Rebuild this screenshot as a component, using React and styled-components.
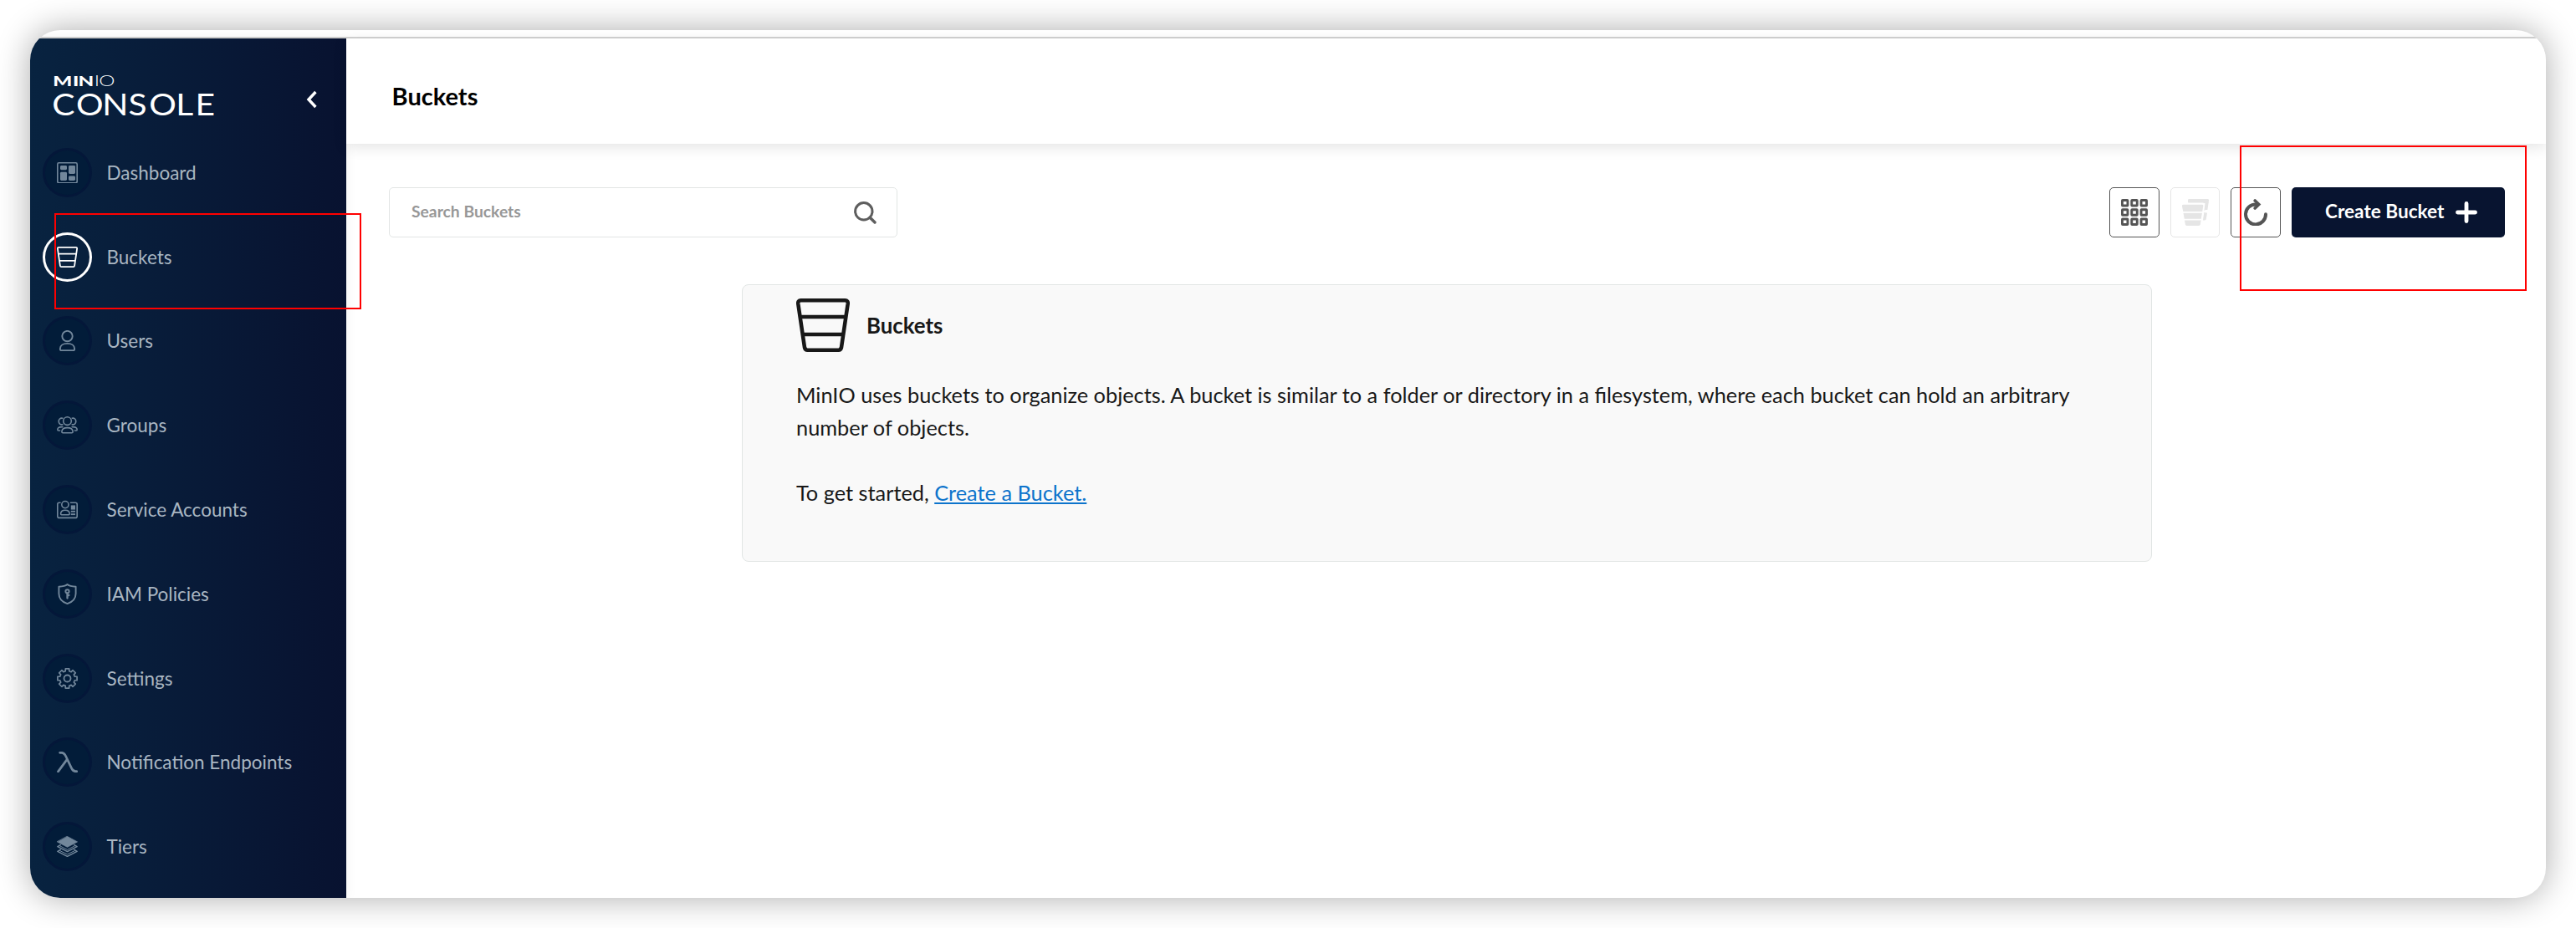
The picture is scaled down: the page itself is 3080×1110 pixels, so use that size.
import React from "react";
import styled, { createGlobalStyle } from "styled-components";

const GlobalStyle = createGlobalStyle`
  *, *::before, *::after { box-sizing: border-box; }
  body {
    margin: 0;
    background: #fff;
    font-family: Lato, "Open Sans", sans-serif;
  }
`;

const Stage = styled.div`
  position: relative;
  width: 3080px;
  height: 1110px;
  padding: 36px;
  overflow: hidden;
  background: #fff;
`;

const Window = styled.div`
  display: flex;
  flex-direction: column;
  width: 3008px;
  height: 1038px;
  border-radius: 36px;
  overflow: hidden;
  background: #fff;
  box-shadow: 0 0 40px rgba(0, 0, 0, 0.33);
`;

const WindowEdge = styled.div`
  flex: none;
  height: 10px;
  border-bottom: 2px solid #d2d2d2;
`;

const Body = styled.div`
  display: flex;
  flex: 1;
  min-height: 0;
`;

const Sidebar = styled.aside`
  flex: none;
  width: 378px;
  background: linear-gradient(90deg, #082340 0%, #081230 100%);
  box-shadow: 0 0 14px rgba(0, 0, 0, 0.06);
`;

const Brand = styled.div`
  display: flex;
  align-items: flex-start;
  justify-content: space-between;
  height: 110px;
  padding: 41px 35px 0 26px;
`;

const LogoSvg = styled.svg`
  display: block;
  overflow: visible;
  fill: #fff;
`;

const CollapseButton = styled.button`
  margin: 21px 0 0;
  padding: 0;
  border: 0;
  background: none;
  line-height: 0;
`;

const Nav = styled.nav`
  display: flex;
  flex-direction: column;
`;

const NavItem = styled.a`
  display: flex;
  align-items: center;
  gap: 17.5px;
  height: 100.8px;
  padding-left: 15px;
  color: #a9b6c2;
  font-size: 22.5px;
  text-decoration: none;
  white-space: nowrap;
`;

const NavIcon = styled.span`
  display: flex;
  align-items: center;
  justify-content: center;
  width: 59px;
  height: 59px;
  border-radius: 50%;
  border: 3px solid ${(p) => (p.$active ? "#fff" : "#041739")};
  background: ${(p) => (p.$active ? "transparent" : "#021c39")};
  color: ${(p) => (p.$active ? "#fff" : "#72879b")};
`;

const Main = styled.main`
  display: flex;
  flex-direction: column;
  flex: 1;
  min-width: 0;
`;

const Header = styled.header`
  display: flex;
  align-items: center;
  flex: none;
  height: 126px;
  padding: 12px 53px 0 54.6px;
  background: #fff;
  box-shadow: 0 4px 16px rgba(0, 0, 0, 0.11);
`;

const PageTitle = styled.h1`
  margin: 0;
  color: #000;
  font-size: 29px;
  font-weight: 700;
  line-height: 36px;
`;

const Toolbar = styled.div`
  display: flex;
  justify-content: space-between;
  padding: 52px 49px 0 51px;
`;

const SearchField = styled.div`
  display: flex;
  align-items: center;
  justify-content: space-between;
  width: 608px;
  height: 60px;
  padding: 0 24px 0 26px;
  border: 1px solid #e2e5e4;
  border-radius: 5px;
  color: #5e5e5e;
`;

const Placeholder = styled.span`
  padding-bottom: 2px;
  color: #979797;
  font-size: 19.3px;
  font-weight: 700;
  line-height: 24px;
`;

const Actions = styled.div`
  display: flex;
  gap: 13px;
`;

const IconButton = styled.button`
  display: flex;
  align-items: center;
  justify-content: center;
  width: 59.6px;
  height: 60px;
  padding: 0;
  border: 1px solid ${(p) => (p.$disabled ? "#e5e5e5" : "#555")};
  border-radius: 5px;
  background: #fff;
  color: ${(p) => (p.$disabled ? "#e5e5e5" : "#555")};
`;

const CreateButton = styled.button`
  display: flex;
  align-items: center;
  justify-content: space-between;
  width: 255px;
  height: 60px;
  padding: 0 33.5px 0 40px;
  border: 0;
  border-radius: 5px;
  background: #081430;
  color: #fff;
  font-family: inherit;
  font-size: 22.6px;
  font-weight: 700;
  white-space: nowrap;
`;

const CreateLabel = styled.span`
  padding-bottom: 3px;
`;

const HelpCard = styled.section`
  align-self: center;
  width: 1686px;
  height: 332px;
  margin: 56px 0 0 2px;
  padding: 16px 64px 0;
  border: 1px solid #e2e6e5;
  border-radius: 8px;
  background: #f9f9f9;
  color: #181818;
`;

const HelpHeading = styled.div`
  display: flex;
  align-items: center;
  gap: 20px;
  height: 64px;
`;

const HelpTitle = styled.h2`
  margin: 0;
  font-size: 25.8px;
  font-weight: 700;
  line-height: 32px;
`;

const HelpText = styled.p`
  margin: 32px 0 0;
  font-size: 25.34px;
  line-height: 39px;
`;

const HelpLink = styled.a`
  color: #0d74cc;
  text-decoration: underline;
`;

const Highlight = styled.div`
  position: absolute;
  left: ${(p) => p.$x}px;
  top: ${(p) => p.$y}px;
  width: ${(p) => p.$w}px;
  height: ${(p) => p.$h}px;
  border: 2px solid #f00;
`;

function Icon({ size = 25, box = 25, children }) {
  return (
    <svg width={size} height={size} viewBox={`0 0 ${box} ${box}`} fill="none" stroke="currentColor" strokeLinejoin="round" strokeLinecap="round">
      {children}
    </svg>
  );
}

const DashboardIcon = () => (
  <Icon>
    <rect x="0.8" y="0.8" width="23.4" height="23.9" rx="1.6" strokeWidth="1.6" />
    <g fill="currentColor" stroke="none">
      <rect x="4" y="4" width="8" height="5.2" rx="1.4" />
      <rect x="14" y="4" width="8" height="10" rx="1.4" />
      <rect x="4" y="11.8" width="8" height="10.2" rx="1.4" />
      <rect x="14" y="16.6" width="8" height="5.4" rx="1.4" />
    </g>
  </Icon>
);

const BucketIcon = ({ size = 25, weight = 4.6 }) => (
  <Icon size={size} box={64}>
    <path
      d="M5.5 2.3 H58.5 Q62.2 2.3 61.7 6.5 L54 58.5 Q53.4 61.7 50.5 61.7 H13.5 Q10.6 61.7 10 58.5 L2.3 6.5 Q1.8 2.3 5.5 2.3 Z M4.6 22 H59.4 M7.8 43 H56.2"
      strokeWidth={weight}
    />
  </Icon>
);

const UserIcon = () => (
  <Icon>
    <g strokeWidth="1.9">
      <circle cx="12.5" cy="7.1" r="6.2" />
      <path d="M3.9 22 C3.9 18 7.7 15.9 12.5 15.9 S21.1 18 21.1 22 V23 Q21.1 24.1 19.9 24.1 H5.1 Q3.9 24.1 3.9 23 Z" />
    </g>
  </Icon>
);

const GroupIcon = () => (
  <Icon>
    <g strokeWidth="1.6">
      <circle cx="12.5" cy="7.6" r="4.8" />
      <path d="M5.9 20.4 C5.9 17.3 8.8 15.6 12.5 15.6 S19.1 17.3 19.1 20.4 Q19.1 21.7 17.9 21.7 H7.1 Q5.9 21.7 5.9 20.4 Z" />
      <path d="M6.8 4.2 C4 3.6 2.2 5.6 2.2 8 C2.2 10.4 4.2 12.4 6.8 11.8 M18.2 4.2 C21 3.6 22.8 5.6 22.8 8 C22.8 10.4 20.8 12.4 18.2 11.8" />
      <path d="M6.8 14.6 C3.2 14.4 0.8 15.6 0.8 18 Q0.8 19 2 19 H3.6 M18.2 14.6 C21.8 14.4 24.2 15.6 24.2 18 Q24.2 19 23 19 H21.4" />
    </g>
  </Icon>
);

const ServiceAccountIcon = () => (
  <Icon>
    <g strokeWidth="1.6">
      <path d="M4 4.2 H2.8 Q0.8 4.2 0.8 6.2 V20.4 Q0.8 22.4 2.8 22.4 H22.2 Q24.2 22.4 24.2 20.4 V6.2 Q24.2 4.2 22.2 4.2 H16.4" />
      <circle cx="9.9" cy="6.6" r="4.1" />
      <path d="M4.6 17.6 C4.6 14.8 7 13.2 9.9 13.2 S15.2 14.8 15.2 17.6 Q15.2 18.8 14.2 18.8 H5.6 Q4.6 18.8 4.6 17.6 Z" />
    </g>
    <g fill="currentColor" stroke="none">
      <rect x="16.8" y="7.4" width="5.2" height="5.2" />
      <rect x="16.8" y="13.8" width="5.2" height="1.9" />
      <rect x="16.8" y="17.2" width="5.2" height="1.9" />
    </g>
  </Icon>
);

const PolicyIcon = () => (
  <Icon>
    <path d="M12.5 1 C14.5 2.7 18 3.5 22.6 3.7 V12 C22.6 18 18.6 22.1 12.5 24.1 C6.4 22.1 2.4 18 2.4 12 V3.7 C7 3.5 10.5 2.7 12.5 1 Z" strokeWidth="1.9" />
    <circle cx="12.5" cy="9.3" r="2.1" strokeWidth="2" />
    <path d="M12.5 11.6 V17.6 M12.5 14 H14.4" strokeWidth="2.3" />
  </Icon>
);

/* Eight-tooth cog outline around (12.5, 12.5). */
const gearPath = (() => {
  const pts = [];
  for (let i = 0; i < 8; i++) {
    const a = (i * Math.PI) / 4 - Math.PI / 2;
    [[-0.25, 9.1], [-0.19, 11.8], [0.19, 11.8], [0.25, 9.1]].forEach(([d, r]) => {
      pts.push(`${(12.5 + r * Math.cos(a + d)).toFixed(2)} ${(12.5 + r * Math.sin(a + d)).toFixed(2)}`);
    });
  }
  return `M${pts.join(" L")} Z`;
})();

const SettingsIcon = () => (
  <Icon>
    <path d={gearPath} strokeWidth="1.7" />
    <circle cx="12.5" cy="12.5" r="4" strokeWidth="1.8" />
  </Icon>
);

const LambdaIcon = () => (
  <Icon>
    <path d="M3.6 1.3 H5.6 C8.4 1.3 9.6 3.2 10.8 5.8 L17.4 19.6 C18.8 22.6 20.2 23.7 22.4 23.7 H23.7 M12.2 9.4 L1.5 23.9" strokeWidth="2.7" />
  </Icon>
);

const TiersIcon = () => (
  <Icon>
    <path d="M12.5 0.5 L24.5 6.9 L12.5 13.3 L0.5 6.9 Z" fill="currentColor" strokeWidth="0.8" />
    <path d="M4.2 10.6 L0.9 12.6 L12.5 18.6 L24.1 12.6 L20.8 10.6 M4.2 16.4 L0.9 18.4 L12.5 24.4 L24.1 18.4 L20.8 16.4" strokeWidth="1.5" />
    <path d="M3.6 11.8 L12.5 16.4 L21.4 11.8 M3.6 17.6 L12.5 21.8 L21.4 17.6" strokeWidth="1" />
  </Icon>
);

const SearchIcon = () => (
  <Icon size={27} box={27}>
    <circle cx="11.8" cy="11.8" r="10.2" strokeWidth="3" />
    <path d="M19.2 19.2 L25 25" strokeWidth="3.4" />
  </Icon>
);

const GridIcon = () => (
  <svg width="32" height="32" viewBox="0 0 32 32" fill="none" stroke="currentColor" strokeWidth="2.9" strokeLinejoin="round">
    {[1.45, 12.75, 24.05].map((y) =>
      [1.45, 12.75, 24.05].map((x) => <rect key={`${x}-${y}`} x={x} y={y} width="6.5" height="6.5" rx="0.5" />)
    )}
  </svg>
);

const MultiBucketIcon = () => (
  <svg width="32" height="32" viewBox="0 0 32 32" fill="currentColor">
    <path d="M8.4 0 H30.6 Q32.1 0 32 1.5 L31.6 5 H26.5 Q25.6 4.6 24.6 4.6 H8.2 Q7 4.6 7 3.4 V1.4 Q7 0 8.4 0 Z" />
    <path d="M27.6 4.6 H31.6 L30.4 13 H28.2 L26.4 14 Z M26.4 15.8 L28 16.4 H30 L28.8 24 Q28.5 25.4 27.2 25.4 H24.9 Z" />
    <path d="M1.6 6.8 H23.8 Q25.5 6.8 25.3 8.4 L24.2 14.9 H1.2 L0 8.4 Q-0.2 6.8 1.6 6.8 Z M1.5 16.8 H23.9 L22.8 23.8 H2.7 Z M3 25.5 H22.6 L21.8 30.6 Q21.5 32 20 32 H5.7 Q4.2 32 3.9 30.6 Z" />
  </svg>
);

const RefreshIcon = () => (
  <Icon size={32} box={32}>
    <path d="M28 18.2 A12 12 0 1 1 16 6.4 H18.5" strokeWidth="4" />
    <path d="M15.2 2 L19.8 6.5 L15.2 11" strokeWidth="3.6" strokeLinejoin="miter" />
  </Icon>
);

const PlusIcon = () => (
  <Icon size={26} box={26}>
    <path d="M13 2.5 V23.5 M2.5 13 H23.5" strokeWidth="4.8" />
  </Icon>
);

const Logo = () => (
  <LogoSvg width="194" height="52" viewBox="0 0 194 52">
    <g transform="scale(1.45 1)" fontSize="16.7">
      <text x="0.8 17.2 21.8" y="16.3" fontWeight="900">MIN</text>
      <text x="35 38.8" y="16.3" fontWeight="300">IO</text>
    </g>
    <text transform="scale(1.12 1)" x="0.2 25.9 53.9 81.6 103.8 132.4 153.2" y="50.6" fontSize="36.4" fontWeight="400">CONSOLE</text>
  </LogoSvg>
);

const navItems = [
  { label: "Dashboard", icon: DashboardIcon },
  { label: "Buckets", icon: BucketIcon, active: true },
  { label: "Users", icon: UserIcon },
  { label: "Groups", icon: GroupIcon },
  { label: "Service Accounts", icon: ServiceAccountIcon },
  { label: "IAM Policies", icon: PolicyIcon },
  { label: "Settings", icon: SettingsIcon },
  { label: "Notification Endpoints", icon: LambdaIcon },
  { label: "Tiers", icon: TiersIcon },
];

export default function App() {
  return (
    <>
      <GlobalStyle />
      <Stage>
        <Window>
          <WindowEdge />
          <Body>
            <Sidebar>
              <Brand>
                <Logo />
                <CollapseButton aria-label="Collapse menu">
                  <svg width="13" height="22" viewBox="0 0 13 22" fill="none" stroke="#fff" strokeWidth="3.4">
                    <path d="M11.4 2 L3 11 L11.4 20" />
                  </svg>
                </CollapseButton>
              </Brand>
              <Nav>
                {navItems.map(({ label, icon: Glyph, active }) => (
                  <NavItem key={label}>
                    <NavIcon $active={active}>
                      <Glyph />
                    </NavIcon>
                    {label}
                  </NavItem>
                ))}
              </Nav>
            </Sidebar>
            <Main>
              <Header>
                <PageTitle>Buckets</PageTitle>
              </Header>
              <Toolbar>
                <SearchField>
                  <Placeholder>Search Buckets</Placeholder>
                  <SearchIcon />
                </SearchField>
                <Actions>
                  <IconButton aria-label="Grid view">
                    <GridIcon />
                  </IconButton>
                  <IconButton $disabled aria-label="Select multiple">
                    <MultiBucketIcon />
                  </IconButton>
                  <IconButton aria-label="Refresh">
                    <RefreshIcon />
                  </IconButton>
                  <CreateButton>
                    <CreateLabel>Create Bucket</CreateLabel>
                    <PlusIcon />
                  </CreateButton>
                </Actions>
              </Toolbar>
              <HelpCard>
                <HelpHeading>
                  <BucketIcon size={64} />
                  <HelpTitle>Buckets</HelpTitle>
                </HelpHeading>
                <HelpText>
                  MinIO uses buckets to organize objects. A bucket is similar to a folder or directory in a filesystem,
                  where each bucket can hold an arbitrary number of objects.
                  <br />
                  <br />
                  To get started, <HelpLink>Create a Bucket.</HelpLink>
                </HelpText>
              </HelpCard>
            </Main>
          </Body>
        </Window>
        <Highlight $x={65} $y={255} $w={367} $h={115} />
        <Highlight $x={2678} $y={174} $w={343} $h={174} />
      </Stage>
    </>
  );
}
